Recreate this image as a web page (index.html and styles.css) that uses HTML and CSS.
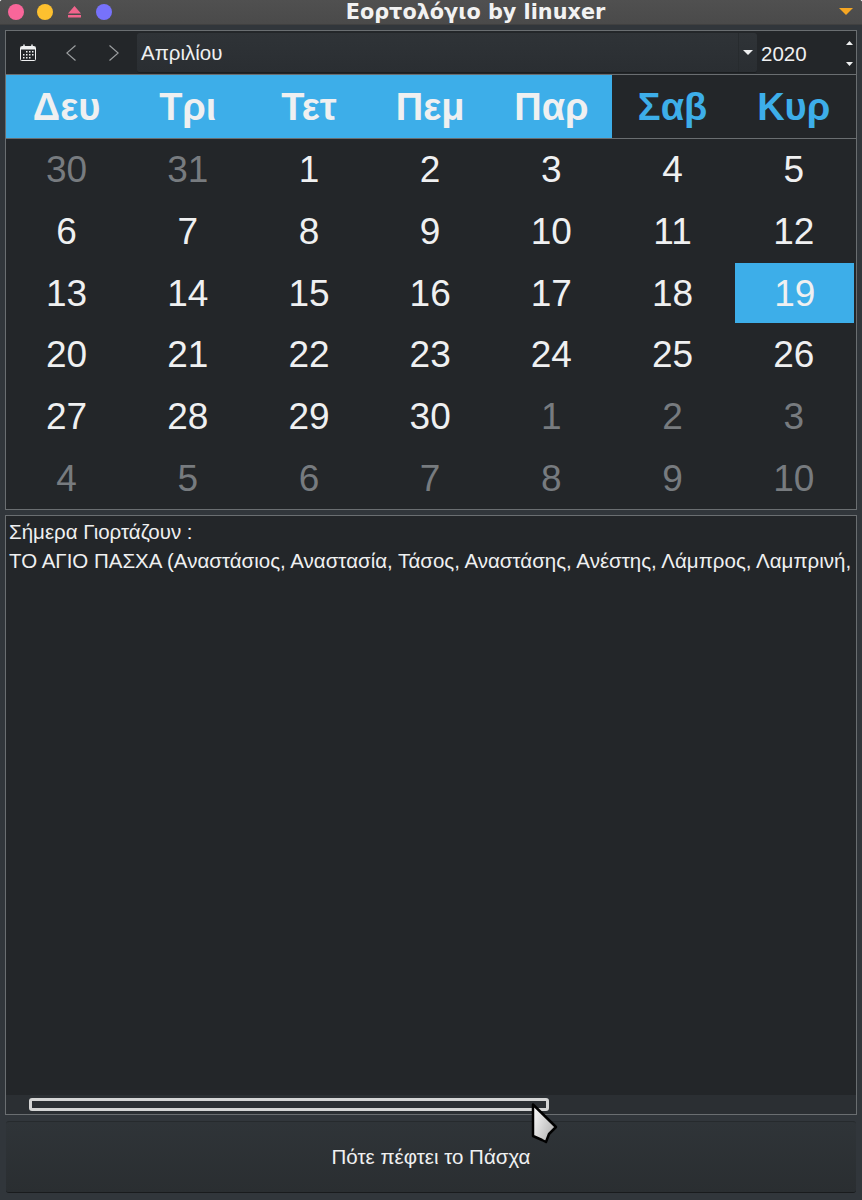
FILE: index.html
```html
<!DOCTYPE html>
<html lang="en">
<head>
   <meta charset="UTF-8">
   <meta name="viewport" content="width=device-width, initial-scale=1.0">
   <title>Εορτολόγιο by linuxer</title>
   <link rel="stylesheet" href="styles.css">
</head>
<body>
   <div class="titlebar">
       <div class="win-buttons">
           <span class="dot dot-close"></span>
           <span class="dot dot-min"></span>
           <svg class="eject" width="17" height="16" viewBox="0 0 17 16"><path d="M8.5 2 L15 9.5 H2 Z M2 11 H15 V13.5 H2 Z" fill="#f0648c"/></svg>
           <span class="dot dot-max"></span>
       </div>
       <div class="win-title">Εορτολόγιο by linuxer</div>
       <svg class="win-menu" width="14" height="8" viewBox="0 0 14 8"><path d="M0 0 H14 L7 7 Z" fill="#f5a623"/></svg>
   </div>

   <div class="content">
       <div class="calendar">
           <div class="toolbar">
               <button class="tool-btn today-btn">
                   <svg width="16" height="17" viewBox="0 0 16 17"><rect x="0.5" y="2.5" width="15" height="14" rx="1" fill="#232629" stroke="#eff0f1"/><rect x="1" y="3" width="14" height="2.5" fill="#eff0f1"/><path d="M4 0.5 V3 M12 0.5 V3" stroke="#eff0f1" stroke-width="1.5"/><path d="M6 7 h1.5 v1.5 h-1.5z M9 7 h1.5 v1.5 h-1.5z M12 7 h1.5 v1.5 h-1.5z M3 10 h1.5 v1.5 h-1.5z M6 10 h1.5 v1.5 h-1.5z M9 10 h1.5 v1.5 h-1.5z M12 10 h1.5 v1.5 h-1.5z M3 13 h1.5 v1.5 h-1.5z M6 13 h1.5 v1.5 h-1.5z M9 13 h1.5 v1.5 h-1.5z" fill="#eff0f1"/></svg>
               </button>
               <button class="tool-btn nav-btn">
                   <svg width="10" height="16" viewBox="0 0 10 16"><path d="M9.5 0.5 L0.8 8 L9.5 15.5" fill="none" stroke="#9a9d9f" stroke-width="1.2"/></svg>
               </button>
               <button class="tool-btn nav-btn">
                   <svg width="10" height="16" viewBox="0 0 10 16"><path d="M0.5 0.5 L9.2 8 L0.5 15.5" fill="none" stroke="#9a9d9f" stroke-width="1.2"/></svg>
               </button>
               <div class="month-combo">
                   <span class="month-name">Απριλίου</span>
                   <span class="combo-arrow"><svg width="10" height="5" viewBox="0 0 10 5"><path d="M0 0 H10 L5 5 Z" fill="#eff0f1"/></svg></span>
               </div>
               <div class="year-spin">
                   <span class="year">2020</span>
                   <span class="spin">
                       <svg width="7" height="4" viewBox="0 0 7 4"><path d="M3.5 0 L7 4 H0 Z" fill="#eff0f1"/></svg>
                       <svg width="7" height="4" viewBox="0 0 7 4"><path d="M0 0 H7 L3.5 4 Z" fill="#eff0f1"/></svg>
                   </span>
               </div>
           </div>
           <div class="week-head">
               <div class="wd">Δευ</div>
               <div class="wd">Τρι</div>
               <div class="wd">Τετ</div>
               <div class="wd">Πεμ</div>
               <div class="wd">Παρ</div>
               <div class="wd wd-end">Σαβ</div>
               <div class="wd wd-end">Κυρ</div>
           </div>
           <div class="days">
               <div class="day other">30</div><div class="day other">31</div><div class="day">1</div><div class="day">2</div><div class="day">3</div><div class="day">4</div><div class="day">5</div>
               <div class="day">6</div><div class="day">7</div><div class="day">8</div><div class="day">9</div><div class="day">10</div><div class="day">11</div><div class="day">12</div>
               <div class="day">13</div><div class="day">14</div><div class="day">15</div><div class="day">16</div><div class="day">17</div><div class="day">18</div><div class="day selected">19</div>
               <div class="day">20</div><div class="day">21</div><div class="day">22</div><div class="day">23</div><div class="day">24</div><div class="day">25</div><div class="day">26</div>
               <div class="day">27</div><div class="day">28</div><div class="day">29</div><div class="day">30</div><div class="day other">1</div><div class="day other">2</div><div class="day other">3</div>
               <div class="day other">4</div><div class="day other">5</div><div class="day other">6</div><div class="day other">7</div><div class="day other">8</div><div class="day other">9</div><div class="day other">10</div>
           </div>
       </div>

       <div class="names">
           <div class="names-text">
               <p>Σήμερα Γιορτάζουν :</p>
               <p>ΤΟ ΑΓΙΟ ΠΑΣΧΑ (Αναστάσιος, Αναστασία, Τάσος, Αναστάσης, Ανέστης, Λάμπρος, Λαμπρινή,</p>
           </div>
           <div class="hscroll">
               <div class="hscroll-thumb"></div>
           </div>
       </div>

       <button class="easter-btn">Πότε πέφτει το Πάσχα</button>
   </div>

   <svg class="cursor" width="27" height="42" viewBox="0 0 27 42">
       <defs>
           <linearGradient id="cursorFill" x1="0" y1="0" x2="1" y2="0.6">
               <stop offset="0" stop-color="#ffffff"/>
               <stop offset="1" stop-color="#b4b4b4"/>
           </linearGradient>
       </defs>
       <path d="M2 1.5 L25 24 L18 31 L15 39 L11 37 L2 33 Z" fill="url(#cursorFill)" stroke="#000" stroke-width="2.5" stroke-linejoin="round"/>
   </svg>
</body>
</html>
```
FILE: styles.css
```css
* {
    box-sizing: border-box;
}
html {
    background-color: #fff;
}
body {
    font-family: "Liberation Sans", Arial, sans-serif;
    background-color: #31363b;
    color: #eff0f1;
    margin: 0;
    padding: 0;
    display: flex;
    flex-direction: column;
    height: 1200px;
    overflow: hidden;
    position: relative;
    border-radius: 3px 3px 0 0;
}
p {
    margin: 0;
}
button {
    font-family: inherit;
    color: inherit;
    cursor: pointer;
}

/* window title bar */
.titlebar {
    height: 25px;
    flex: none;
    display: flex;
    align-items: center;
    padding: 0 9px 0 8px;
    background: linear-gradient(to bottom, #505050, #4a4a4a);
    border-bottom: 1px solid #404040;
}
.win-buttons {
    display: flex;
    align-items: center;
    gap: 13px;
    width: 104px;
}
.dot {
    width: 16px;
    height: 16px;
    border-radius: 50%;
}
.dot-close {
    background-color: #f9669a;
}
.dot-min {
    background-color: #fdc02f;
}
.dot-max {
    background-color: #7772fb;
}
.win-title {
    flex: 1;
    text-align: center;
    font-family: "DejaVu Sans", sans-serif;
    font-weight: bold;
    font-size: 20.8px;
    line-height: 24px;
    color: #f2f2f2;
}
.win-menu {
    flex: none;
}

/* main area */
.content {
    flex: 1;
    display: flex;
    flex-direction: column;
    padding: 5px 5px 7px;
    gap: 5px;
}
.calendar {
    flex: none;
    height: 480px;
    border: 1px solid #6a6e71;
    background-color: #232629;
    display: flex;
    flex-direction: column;
}
.toolbar {
    height: 44px;
    flex: none;
    display: flex;
    align-items: center;
    border-bottom: 1px solid #6a6e71;
}
.tool-btn {
    background: none;
    border: none;
    padding: 0;
    display: flex;
    align-items: center;
    justify-content: center;
    height: 100%;
}
.today-btn {
    width: 43px;
}
.nav-btn {
    width: 43px;
}
.month-combo {
    width: 620px;
    height: 40px;
    margin-left: 2px;
    display: flex;
    align-items: center;
    justify-content: space-between;
    background: linear-gradient(to bottom, #2f3337, #2a2e32);
    border-radius: 3px;
    border-bottom: 1px solid #1b1e20;
    font-size: 20.5px;
    padding-left: 4px;
}
.month-name {
    position: relative;
    top: 1px;
}
.combo-arrow {
    display: flex;
    align-items: center;
    justify-content: center;
    width: 19px;
    height: 100%;
    border-left: 1px solid #272b2e;
}
.year-spin {
    flex: 1;
    height: 100%;
    display: flex;
    align-items: center;
    justify-content: space-between;
    padding: 2px 3px 0 4px;
    font-size: 20.5px;
}
.spin {
    display: flex;
    flex-direction: column;
    gap: 17px;
}
.spin svg {
    display: block;
}

.week-head {
    height: 64px;
    flex: none;
    display: grid;
    grid-template-columns: repeat(7, 121.2px);
    border-bottom: 1px solid #6a6e71;
}
.wd {
    display: flex;
    align-items: center;
    justify-content: center;
    font-size: 38px;
    font-weight: bold;
    padding-top: 1px;
    color: #eff0f1;
    background-color: #3daee9;
}
.wd-end {
    color: #3daee9;
    background-color: #232629;
}
.days {
    flex: 1;
    display: grid;
    grid-template-columns: repeat(7, 121.2px);
    grid-template-rows: repeat(6, 1fr);
}
.day {
    display: flex;
    align-items: center;
    justify-content: center;
    padding-top: 1px;
    font-size: 37px;
    color: #eff0f1;
}
.day.other {
    color: #777b7f;
}
.day.selected {
    background-color: #3daee9;
    margin: 1px 0 1px 2px;
}

/* names text box */
.names {
    flex: 1;
    min-height: 0;
    border: 1px solid #6a6e71;
    background-color: #232629;
    display: flex;
    flex-direction: column;
}
.names-text {
    flex: 1;
    overflow: hidden;
    padding: 3px;
    font-size: 20.5px;
    line-height: 31px;
    white-space: nowrap;
}
.names-text p:first-child {
    line-height: 26px;
}
.hscroll {
    height: 19px;
    flex: none;
    background-color: #2b2f33;
    padding: 3px 0 0 23px;
}
.hscroll-thumb {
    width: 520px;
    height: 13px;
    background-color: #2b2f33;
    border: 3px solid #d4d5d5;
    border-radius: 3px;
}

.easter-btn {
    flex: none;
    height: 72px;
    margin: 1px 1px 0;
    border: none;
    border-top: 1px solid #262a2d;
    border-bottom: 1px solid #191b1d;
    border-radius: 3px;
    background: linear-gradient(to bottom, #2f3438, #2a2e31);
    font-size: 20.5px;
}

/* mouse pointer in the shot */
.cursor {
    position: absolute;
    left: 531px;
    top: 1103px;
}
```
